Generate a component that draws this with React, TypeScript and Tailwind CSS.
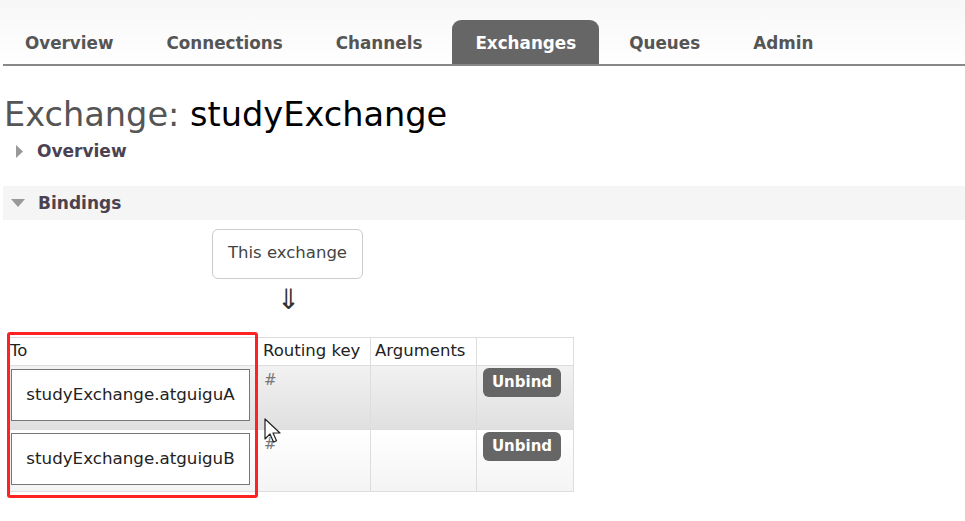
import React from "react";

const tabs = ["Overview", "Connections", "Channels", "Exchanges", "Queues", "Admin"];

function Cursor() {
  return (
    <svg width="20" height="28" viewBox="0 0 20 28" className="absolute left-[264px] top-[418px]">
      <path d="M1 1 L1 21 L6 16 L9.5 24 L12.5 22.8 L9 15 L16 15 Z" fill="white" stroke="#222" strokeWidth="1.2" strokeLinejoin="round" />
    </svg>
  );
}

export default function App() {
  return (
    <div className="relative w-[965px] h-[521px] overflow-hidden bg-white text-[#444]" style={{ fontFamily: '"DejaVu Sans", Verdana, sans-serif' }}>
      {/* nav */}
      <div className="bg-gradient-to-b from-[#f7f7f7] to-white pt-[20px]">
        <div className="ml-[3px] flex h-[46px] items-stretch border-b-2 border-[#888]">
          <div className="-ml-[4.5px] flex items-stretch">
            {tabs.map((t) => (
              <div
                key={t}
                className={
                  t === "Exchanges"
                    ? "mx-[3.5px] flex items-center justify-center rounded-t-[9px] bg-[#666] px-[23px] text-[16.8px] font-bold text-white"
                    : "mx-[3.5px] flex items-center justify-center px-[23px] text-[16.8px] font-bold text-[#555]"
                }
              >
                <span className="pt-[4px]">{t}</span>
              </div>
            ))}
          </div>
        </div>
      </div>

      <h1 className="ml-[4px] mt-[29px] text-[33.6px] leading-[40px] font-normal text-[#555]">
        Exchange: <span className="text-black">studyExchange</span>
      </h1>

      <div className="ml-[16px] mt-[4px] flex items-center gap-[13px] text-[17px] font-bold text-[#4a4250]">
        <svg width="8" height="13" viewBox="0 0 8 13"><path d="M0 0 L7 6.5 L0 13 Z" fill="#999" /></svg>
        <span>Overview</span>
      </div>

      <div className="ml-[3px] mt-[21px] flex h-[34px] items-center gap-[13px] bg-[#f5f5f5] pl-[8px] text-[17px] font-bold text-[#4a4250]">
        <svg width="14" height="8" viewBox="0 0 14 8"><path d="M0 0 L14 0 L7 8 Z" fill="#999" /></svg>
        <span className="pt-[2px]">Bindings</span>
      </div>

      <div className="ml-[212px] mt-[9px] flex h-[50px] w-[151px] items-center justify-center rounded-[6px] border border-[#ccc] text-[16.5px] text-[#444]">
        This exchange
      </div>
      <div className="ml-[277px] mt-[6px] h-[30px] text-[28px] leading-[30px] text-[#333]">⇓</div>

      <table className="ml-[7px] mt-[22px] border-collapse text-[16.5px] text-[#222]">
        <thead>
          <tr className="h-[28px] bg-white">
            <th className="w-[249px] border border-[#ddd] px-[2px] text-left font-normal">To</th>
            <th className="w-[114px] border border-[#ddd] px-[6px] text-left font-normal">Routing key</th>
            <th className="w-[106px] border border-[#ddd] px-[4px] text-left font-normal">Arguments</th>
            <th className="w-[97px] border border-[#ddd]"></th>
          </tr>
        </thead>
        <tbody>
          {["A", "B"].map((s, i) => (
            <tr
              key={s}
              className={
                i === 0
                  ? "h-[64px] bg-gradient-to-b from-[#f2f2f2] to-[#e0e0e0]"
                  : "h-[62px] bg-gradient-to-b from-white to-[#f4f4f4]"
              }
            >
              <td className="border border-[#ddd] px-[3px] py-[3px] align-top">
                <div className="flex h-[52px] w-[239px] items-center justify-center border border-[#777] bg-white text-[16.7px] text-[#222]">
                  studyExchange.atguigu{s}
                </div>
              </td>
              <td className="border border-[#ddd] px-[7px] pt-[3px] align-top text-[15px] text-[#777]">#</td>
              <td className="border border-[#ddd]"></td>
              <td className="border border-[#ddd] px-[6px] pt-[2px] align-top">
                <div className="flex h-[29px] w-[78px] items-center justify-center rounded-[6px] bg-[#666] text-[15px] font-bold text-white">
                  Unbind
                </div>
              </td>
            </tr>
          ))}
        </tbody>
      </table>

      <div className="absolute left-[7px] top-[332px] h-[166px] w-[251px] rounded-[3px] border-[3px] border-[#f22]"></div>
      <Cursor />
    </div>
  );
}
